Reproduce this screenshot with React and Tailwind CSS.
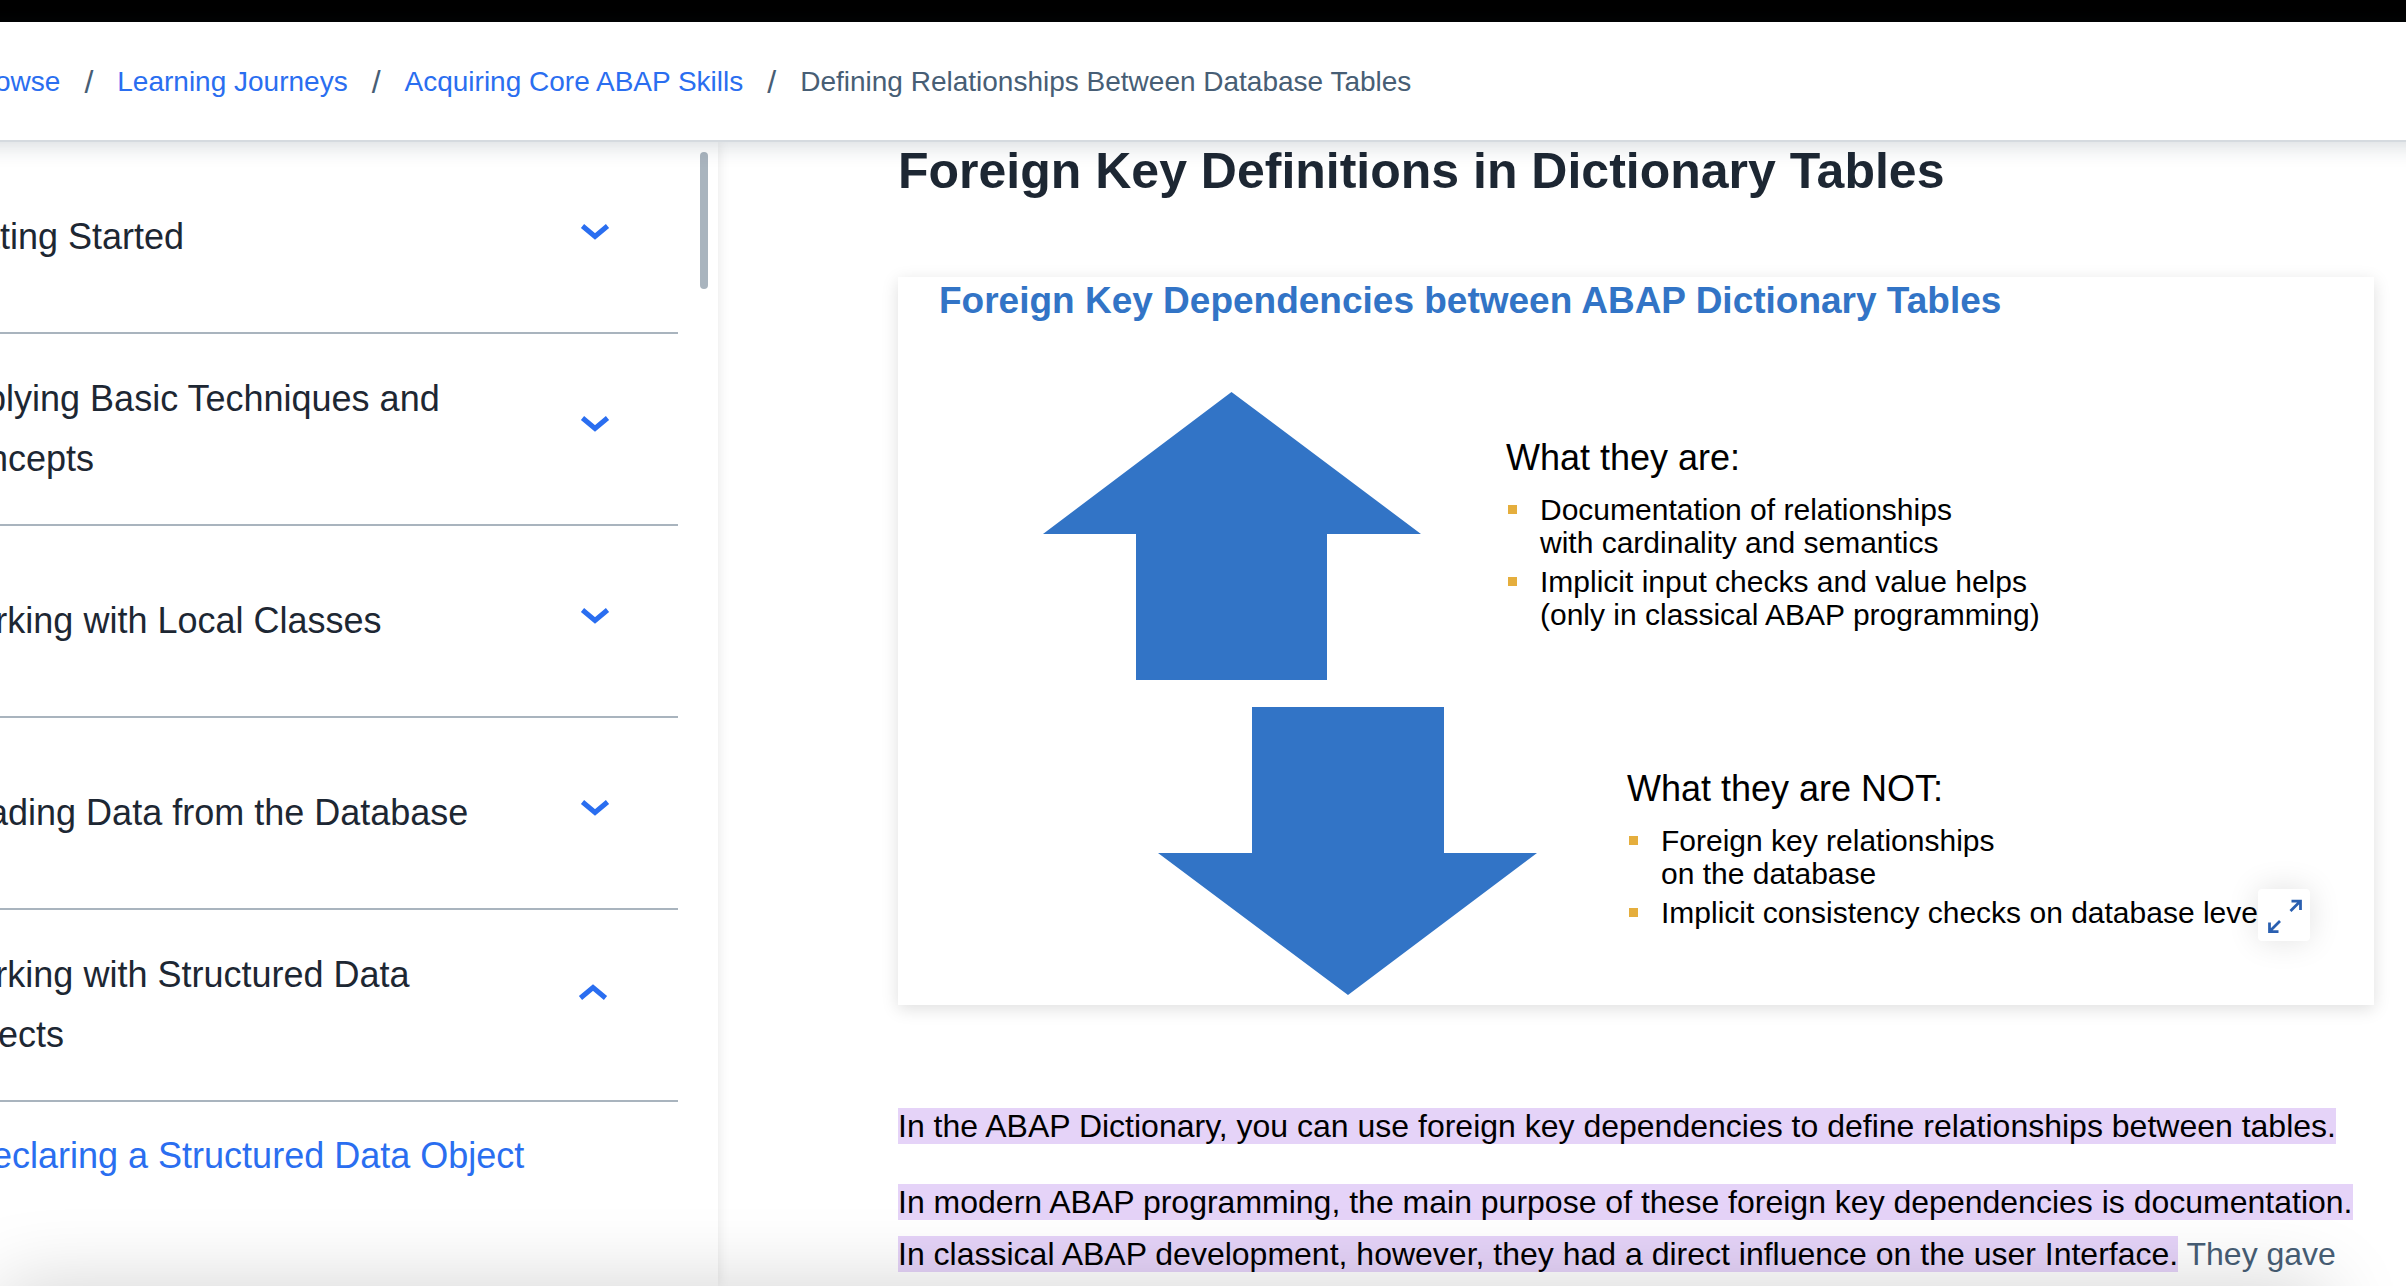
import React from "react";

const crumbs = ["Browse", "Learning Journeys", "Acquiring Core ABAP Skills"];

const units = [
  { title: "Getting Started" },
  { title: "Applying Basic Techniques and Concepts" },
  { title: "Working with Local Classes" },
  { title: "Reading Data from the Database" },
  { title: "Working with Structured Data Objects", lessons: ["Declaring a Structured Data Object"] },
];

function Chevron({ open }) {
  return (
    <svg
      viewBox="0 0 32 32"
      className={open ? "mb-[18px] size-8 shrink-0 rotate-180" : "mb-[18px] size-8 shrink-0"}
      fill="none"
      stroke="#2a6ef0"
      strokeWidth="5"
      aria-hidden="true"
    >
      <path d="M4.5 14 L17 24.500 L29.500 14" />
    </svg>
  );
}

function Unit({ title, lessons }) {
  const open = Boolean(lessons);
  return (
    <li>
      <button
        type="button"
        aria-expanded={open}
        className="flex min-h-48 w-full items-center justify-between border-b-2 border-[#a9b4be] py-[35px] pr-[68px] text-left text-[#1d2733]"
      >
        <span className="max-w-[540px]">{title}</span>
        <Chevron open={open} />
      </button>
      {open && (
        <ul className="pt-6 pl-6">
          {lessons.map((l) => (
            <li key={l}>
              <a href="#lesson" className="text-[#2a6ef0]">{l}</a>
            </li>
          ))}
        </ul>
      )}
    </li>
  );
}

function Points({ title, items }) {
  return (
    <div className="pb-1.5">
      <h4 className="mb-[13px] text-[36px] leading-[44px]">{title}</h4>
      <ul className="flex flex-col gap-1.5 text-[30px] leading-[33px]">
        {items.map((lines) => (
          <li key={lines[0]} className="flex gap-[23px] pl-0.5">
            <span className="mt-3 size-[9px] shrink-0 bg-[#e5ae3d]" />
            <span>
              {lines.map((t) => (
                <span key={t} className="block whitespace-nowrap">{t}</span>
              ))}
            </span>
          </li>
        ))}
      </ul>
    </div>
  );
}

export default function App() {
  return (
    <div className="relative flex h-screen flex-col overflow-hidden bg-white font-['Liberation_Sans',Arial,sans-serif]">
      <div className="h-[22px] shrink-0 bg-black" />
      <header className="relative z-10 -mx-[33px] flex h-[120px] shrink-0 items-center border-b-2 border-[#d5dadf] bg-white pt-0.5 text-[28px] leading-10 shadow-[0_4px_20px_rgba(34,53,72,0.18)]">
        <nav aria-label="Breadcrumb">
          <ol className="flex gap-6 whitespace-nowrap text-[#475e75]">
            {crumbs.map((c) => (
              <li key={c} className="flex gap-6">
                <a href="#crumb" className="text-[#2a6ef0]">{c}</a>
                <span aria-hidden="true" className="text-[32px]">/</span>
              </li>
            ))}
            <li aria-current="page">Defining Relationships Between Database Tables</li>
          </ol>
        </nav>
      </header>

      <div className="flex min-h-0 flex-1">
        <aside className="relative w-[718px] shrink-0 shadow-[0_0_12px_rgba(0,0,0,0.1)]">
          <ul className="mr-10 -ml-[58px] text-[36px] leading-[60px]">
            {units.map((u) => (
              <Unit key={u.title} {...u} />
            ))}
          </ul>
          <div className="absolute top-2.5 right-2.5 h-[137px] w-2 rounded-full bg-[#a9b4be]" />
        </aside>

        <main className="min-w-0 flex-1 pr-8 pl-[180px]">
          <h2 className="text-[50px] leading-[58px] font-bold whitespace-nowrap text-[#1d2733]">
            Foreign Key Definitions in Dictionary Tables
          </h2>

          <figure className="relative mt-[77px] bg-white pb-2.5 text-black shadow-[0_4px_16px_rgba(0,0,0,0.13)]">
            <h3 className="mb-[67px] pl-[41px] text-[37px] leading-[48px] font-bold whitespace-nowrap text-[#3274c6]">
              Foreign Key Dependencies between ABAP Dictionary Tables
            </h3>
            <div className="flex flex-col gap-[27px]">
              <div className="flex items-center gap-[85px] pl-[145px]">
                <svg viewBox="0 0 378 288" className="h-72 w-[378px] shrink-0" fill="#3274c6" aria-hidden="true">
                  <path d="M188.500 0 L378 142 H284 V288 H93 V142 H0 Z" />
                </svg>
                <Points
                  title="What they are:"
                  items={[
                    ["Documentation of relationships", "with cardinality and semantics"],
                    ["Implicit input checks and value helps", "(only in classical ABAP programming)"],
                  ]}
                />
              </div>
              <div className="flex items-center gap-[90px] pl-[260px]">
                <svg viewBox="0 0 379 288" className="h-72 w-[379px] shrink-0" fill="#3274c6" aria-hidden="true">
                  <path d="M94 0 H286 V146 H379 L190 288 L0 146 H94 Z" />
                </svg>
                <Points
                  title="What they are NOT:"
                  items={[
                    ["Foreign key relationships", "on the database"],
                    ["Implicit consistency checks on database level"],
                  ]}
                />
              </div>
            </div>
            <button
              type="button"
              aria-label="Expand image"
              className="absolute right-16 bottom-16 size-[52px] rounded bg-white shadow-[0_0_32px_rgba(0,0,0,0.12)]"
            >
              <svg viewBox="0 0 52 52" className="size-full" fill="none" stroke="#2a5fb0" strokeWidth="2.750" aria-hidden="true">
                <path d="M33.500 12 H42.500 V21 M42.500 12 L32.500 22 M11.500 33.500 V42.500 H20.500 M11.500 42.500 L22 32" />
              </svg>
            </button>
          </figure>

          <div className="mt-[95px] flex flex-col gap-6 text-[32px] leading-[52px] whitespace-nowrap text-[#475e75]">
            <p>
              <mark className="bg-[#e5d3f8] text-black">
                In the ABAP Dictionary, you can use foreign key dependencies to define relationships between tables.
              </mark>
            </p>
            <p>
              <mark className="bg-[#e5d3f8] text-black">
                In modern ABAP programming, the main purpose of these foreign key dependencies is documentation.
                <br />
                In classical ABAP development, however, they had a direct influence on the user Interface.
              </mark>{" "}
              They gave
            </p>
          </div>
        </main>
      </div>

      <div className="pointer-events-none absolute top-full right-20 left-0 z-20 h-20 shadow-[0_0_80px_rgba(0,0,0,0.18)]" />
    </div>
  );
}
